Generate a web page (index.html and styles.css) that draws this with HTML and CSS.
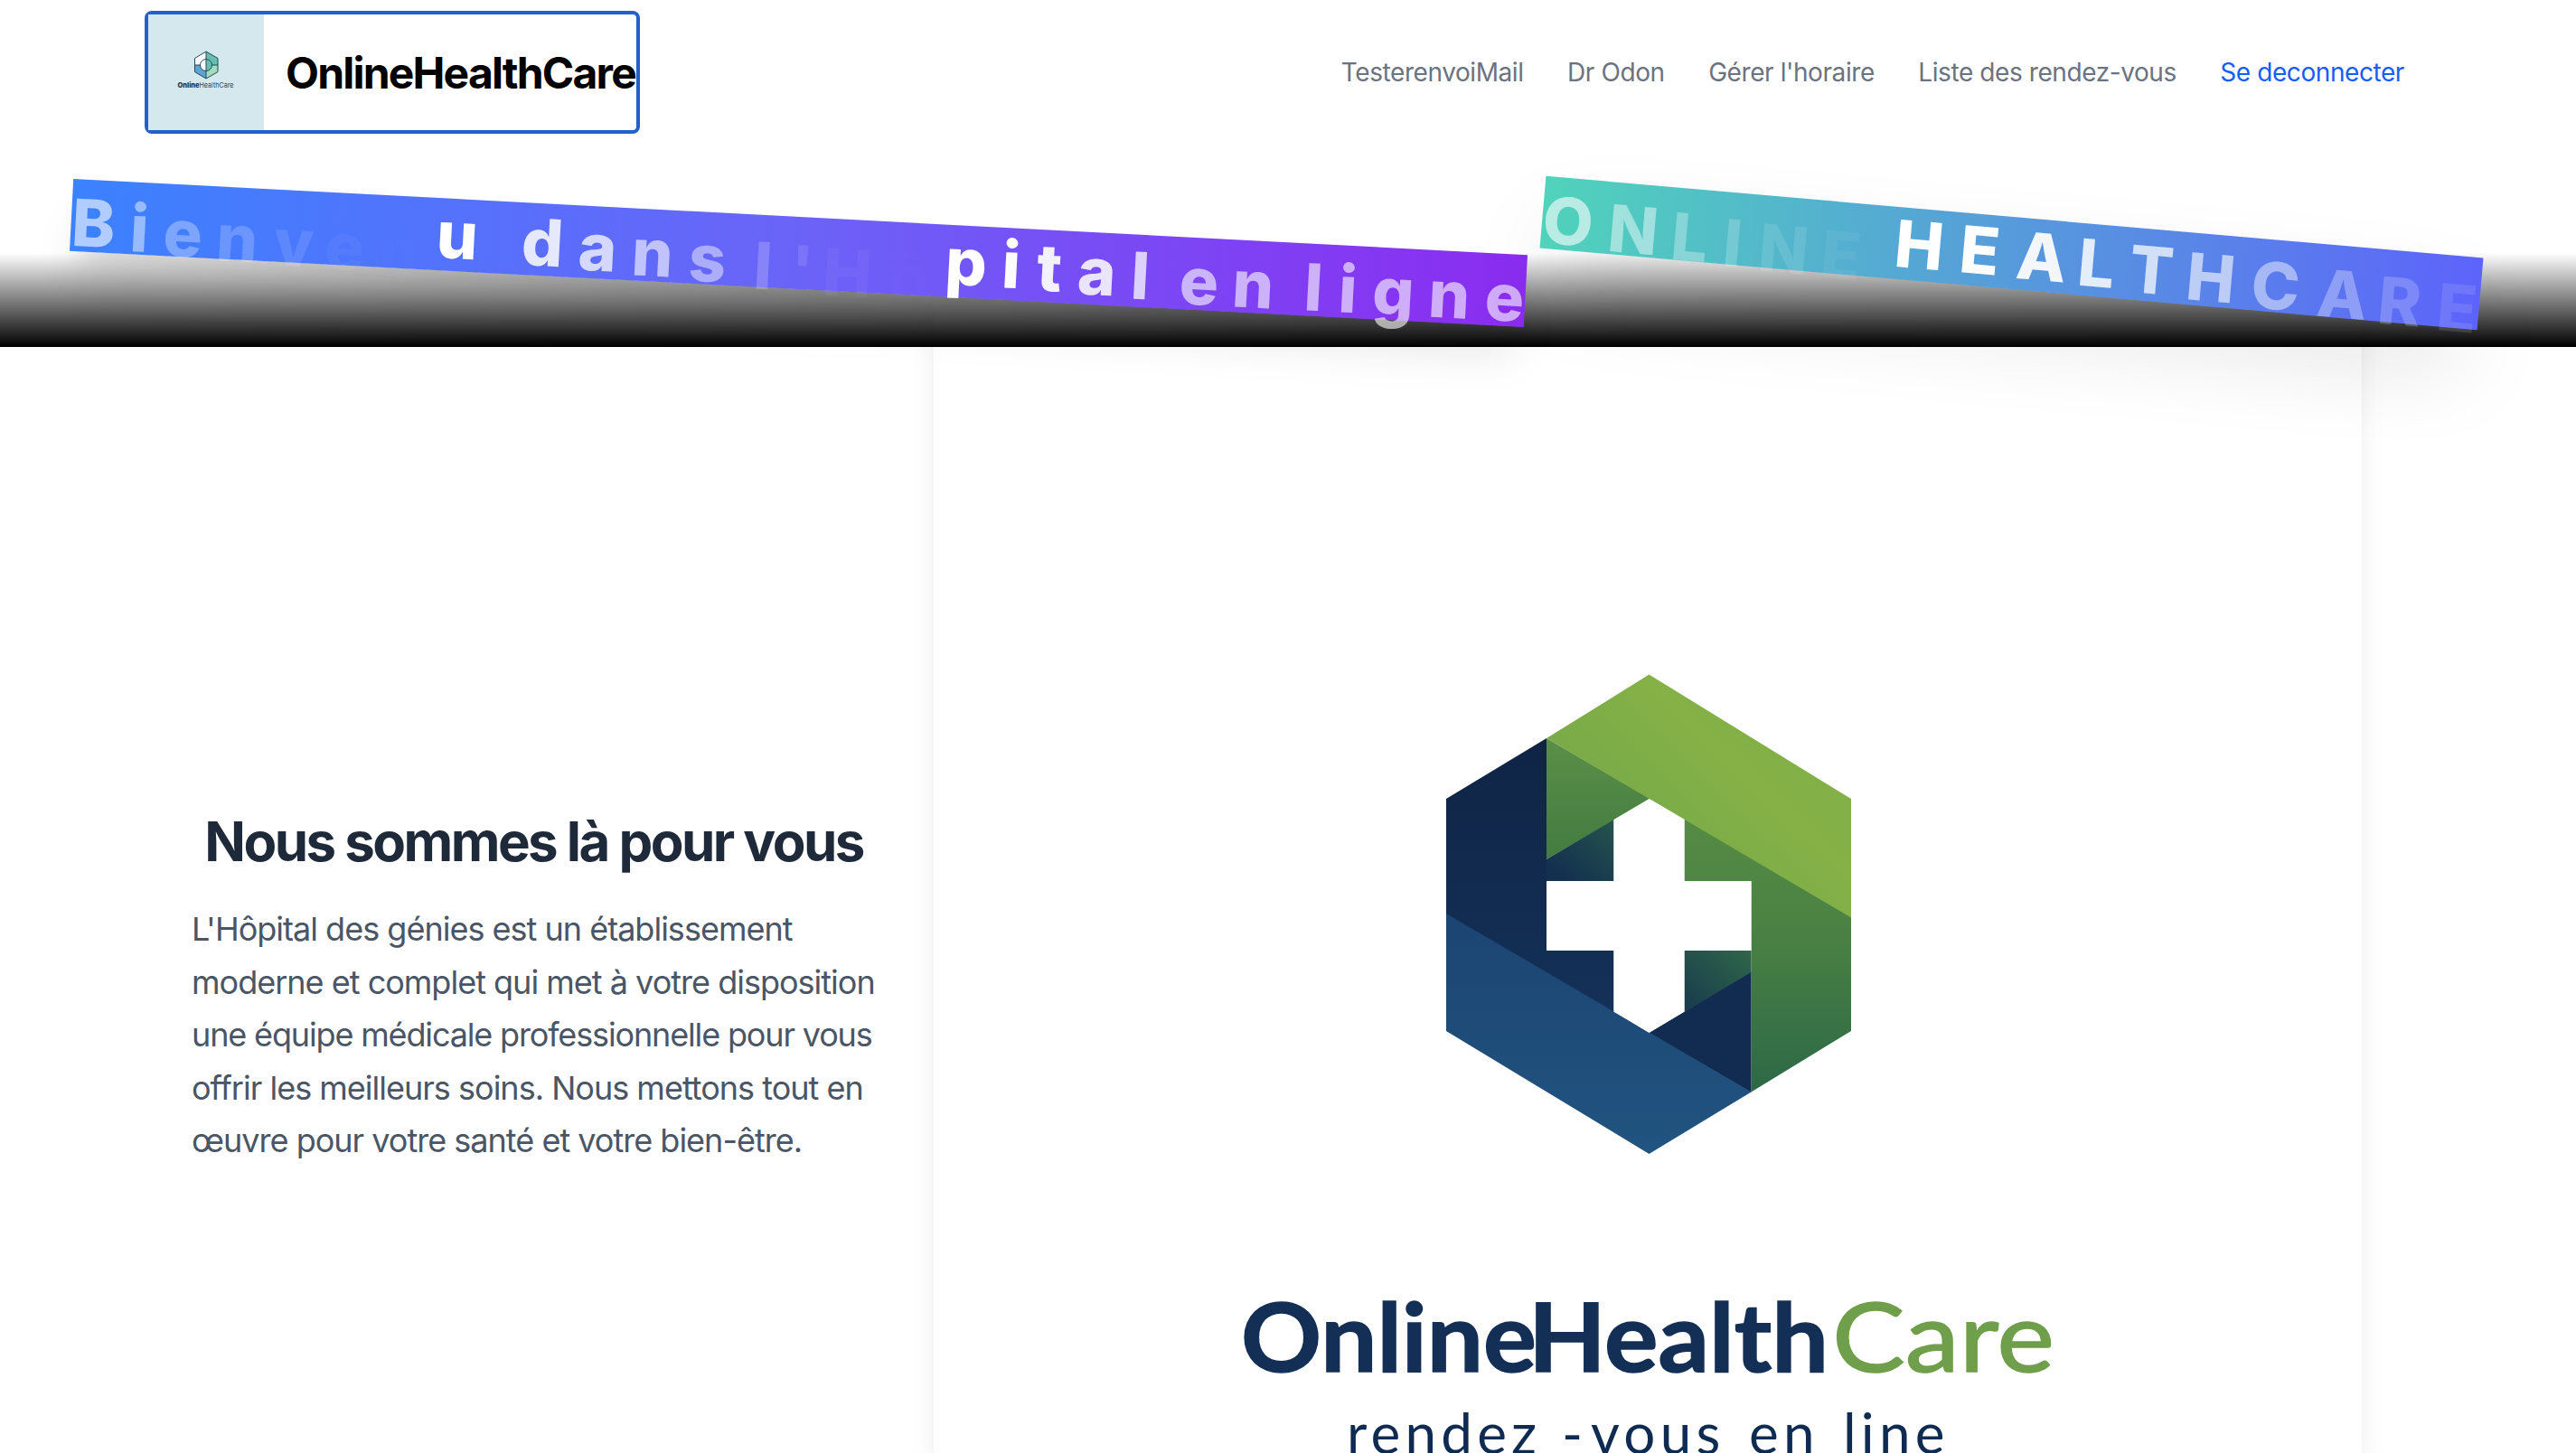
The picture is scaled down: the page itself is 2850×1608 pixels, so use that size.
FILE: index.html
```html
<!DOCTYPE html>
<html lang="fr">
<head>
<meta charset="utf-8">
<title>OnlineHealthCare</title>
<link rel="stylesheet" href="styles.css">
</head>
<body>
<header class="header">
  <a class="brand">
    <svg class="brand-logo" viewBox="0 0 128 128">
      <rect width="128" height="128" fill="#d5e8ed"/>
      <path d="M64 41V56H51.500V48.500Z" fill="#fff"/>
      <path d="M64 41L77 48.500V56H64Z" fill="#66bfae"/>
      <path d="M51.500 56H64V71L51.500 63.500Z" fill="#5fa3d3"/>
      <path d="M77 56H64V71L77 63.500Z" fill="#a3dcbd"/>
      <path d="M64 49.500A6.500 6.500 0 0 0 64 62.500Z" fill="#fff"/>
      <path d="M64 49.500A6.500 6.500 0 0 1 64 62.500Z" fill="#66bfae"/>
      <path d="M64 41L77 48.500V63.500L64 71L51.500 63.500V48.500ZM64 41V71M51.500 56H57.500M70.500 56H77" fill="none" stroke="#23485c"/>
      <circle cx="64" cy="56" r="6.500" fill="none" stroke="#23485c"/>
      <text class="brand-mini brand-mini-bold" x="32.500" y="81" textLength="24" lengthAdjust="spacingAndGlyphs">Online</text>
      <text class="brand-mini" x="56.500" y="81" textLength="38" lengthAdjust="spacingAndGlyphs">HealthCare</text>
    </svg>
    <span class="brand-name">OnlineHealthCare</span>
  </a>
  <nav class="nav">
    <a>TesterenvoiMail</a><a>Dr Odon</a><a>Gérer l'horaire</a><a>Liste des rendez-vous</a><a class="logout">Se deconnecter</a>
  </nav>
</header>
<section class="hero">
  <h1 class="banner banner-welcome"><i style="--o:.6;--w:64.6px">B</i><i style="--o:.46;--w:37px">i</i><i style="--o:.31;--w:59.1px">e</i><i style="--o:.2;--w:63.6px">n</i><i style="--o:.11;--w:56.7px">v</i><i style="--o:.04;--w:59px">e</i><i style="--o:.005;--w:63.5px">n</i><i style="--o:1;--w:94.7px">u </i><i style="--o:.85;--w:62.8px">d</i><i style="--o:.74;--w:59.4px">a</i><i style="--o:.6;--w:63.1px">n</i><i style="--o:.46;--w:72.5px">s </i><i style="--o:.2;--w:40.6px">l</i><i style="--o:.11;--w:36.1px">'</i><i style="--o:.04;--w:72.1px">H</i><i style="--o:.005;--w:62.6px">ô</i><i style="--o:1;--w:62.6px">p</i><i style="--o:.98;--w:39px">i</i><i style="--o:.92;--w:45px">t</i><i style="--o:.85;--w:59.3px">a</i><i style="--o:.74;--w:53.9px">l </i><i style="--o:.6;--w:58.6px">e</i><i style="--o:.6;--w:79.7px">n </i><i style="--o:.6;--w:38px">l</i><i style="--o:.6;--w:37.5px">i</i><i style="--o:.6;--w:62px">g</i><i style="--o:.6;--w:62.7px">n</i><i style="--o:.6;--w:45.3px">e</i></h1>
  <h1 class="banner banner-name"><i style="--o:.6;--w:72.7px">O</i><i style="--o:.46;--w:70.3px">N</i><i style="--o:.31;--w:58px">L</i><i style="--o:.2;--w:39.6px">I</i><i style="--o:.11;--w:69.4px">N</i><i style="--o:.05;--w:80.2px">E </i><i style="--o:1;--w:72.1px">H</i><i style="--o:.99;--w:63.2px">E</i><i style="--o:.93;--w:68.5px">A</i><i style="--o:.84;--w:57px">L</i><i style="--o:.73;--w:63.7px">T</i><i style="--o:.6;--w:72.3px">H</i><i style="--o:.46;--w:73.5px">C</i><i style="--o:.31;--w:67.8px">A</i><i style="--o:.2;--w:65.7px">R</i><i style="--o:.11;--w:46px">E</i></h1>
</section>
<main class="about">
  <div class="about-text">
    <h2>Nous sommes là pour vous</h2>
    <p>L'Hôpital des génies est un établissement<br>moderne et complet qui met à votre disposition<br><span class="tight">une équipe médicale professionnelle pour vous</span><br>offrir les meilleurs soins. Nous mettons tout en<br>œuvre pour votre santé et votre bien-être.</p>
  </div>
  <div class="about-card">
    <svg class="card-art" viewBox="1033 324 1580 1284">
      <defs>
        <linearGradient id="lime" x1="0" y1=".5" x2=".6" y2="0"><stop offset="0" stop-color="#74a848"/><stop offset=".7" stop-color="#85b147"/><stop offset="1" stop-color="#82b046"/></linearGradient>
        <linearGradient id="green" x1="0" y1="0" x2="0" y2="1"><stop offset="0" stop-color="#568b45"/><stop offset=".4" stop-color="#4b8243"/><stop offset="1" stop-color="#2d6847"/></linearGradient>
        <linearGradient id="leaf" x1="0" y1="0" x2="0" y2="1"><stop offset="0" stop-color="#5b8f48"/><stop offset="1" stop-color="#437b41"/></linearGradient>
        <linearGradient id="navy" x1="0" y1="0" x2="0" y2="1"><stop offset="0" stop-color="#0f2445"/><stop offset="1" stop-color="#143158"/></linearGradient>
        <linearGradient id="blue" x1="0" y1="0" x2="0" y2="1"><stop offset="0" stop-color="#1c4472"/><stop offset="1" stop-color="#215480"/></linearGradient>
        <linearGradient id="tealA" x1="0" y1="1" x2="1" y2="0"><stop offset=".15" stop-color="#13304f"/><stop offset="1" stop-color="#26544d"/></linearGradient>
        <linearGradient id="tealB" x1="0" y1="1" x2="1" y2="0"><stop offset="0" stop-color="#183a4e"/><stop offset="1" stop-color="#2f6649"/></linearGradient>
      </defs>
      <path d="M1600 884L1711 817V1052H1785.500V1122L1600 1013Z" fill="url(#navy)"/>
      <path d="M1711 817L1826 884L1711 951Z" fill="url(#leaf)"/>
      <path d="M1711 951L1785.500 907V975H1711Z" fill="url(#tealA)"/>
      <path d="M1863.500 905L2048 1014V1141L1937.500 1208.500V975H1863.500Z" fill="url(#green)"/>
      <path d="M1863.500 1052H1937.500V1077L1863.500 1120Z" fill="url(#tealB)"/>
      <path d="M1824 1143L1937.500 1076V1209Z" fill="#122b50"/>
      <path d="M1711 817L1824.500 746.500L2048 884V1015.500Z" fill="url(#lime)"/>
      <path d="M1600 1011L1937.500 1208.500L1824.500 1277L1600 1141Z" fill="url(#blue)"/>
      <path d="M1824.500 884L1863.500 907V975H1937.500V1052H1863.500V1119.500L1824.500 1143L1785.500 1119.500V1052H1711V975H1785.500V907Z" fill="#fff"/>
      <text class="art-title" x="1373" y="1517.500" textLength="327" lengthAdjust="spacingAndGlyphs">Online</text>
      <text class="art-title" x="1691" y="1517.500" textLength="332" lengthAdjust="spacingAndGlyphs">Health</text>
      <text class="art-title art-care" x="2027" y="1517.500" textLength="246" lengthAdjust="spacingAndGlyphs">Care</text>
      <text class="art-sub" y="1609"><tspan x="1490">rendez</tspan><tspan x="1728">-</tspan><tspan x="1760">vous</tspan><tspan x="1935">en</tspan><tspan x="2039">line</tspan></text>
    </svg>
  </div>
</main>
</body>
</html>
```
FILE: styles.css
```css
* { box-sizing: border-box; }
body { margin: 0; height: 1608px; overflow: hidden; background: #fff; font-family: Inter, "Liberation Sans", sans-serif; display: flex; flex-direction: column; }
h1, h2, p { margin: 0; }

.header { height: 160px; flex: none; padding: 0 190px 0 160px; display: flex; align-items: center; justify-content: space-between; }
.brand { width: 548px; height: 136px; border: 4px solid #2161cb; border-radius: 8px; display: flex; align-items: center; gap: 24px; white-space: nowrap; }
.brand-logo { width: 128px; height: 128px; flex: none; }
.brand-mini { font-size: 8px; fill: #23485c; }
.brand-mini-bold { font-weight: 800; fill: #14303f; }
.brand-name { font-size: 48px; font-weight: 650; letter-spacing: -1.800px; color: #000; }
.nav { display: flex; gap: 48.500px; font-size: 28px; letter-spacing: -.420px; color: #6b7280; white-space: nowrap; }
.logout { color: #155dfc; }

.hero { position: relative; z-index: 1; height: 224px; flex: none; padding: 80px 0 0 78px; display: flex; gap: 16px; align-items: flex-start; background: linear-gradient(transparent 120px, #000 224px); }
.banner { height: 80px; flex: none; display: flex; padding-left: 1px; font-size: 72px; line-height: 80px; font-weight: 800; color: #fff; white-space: nowrap; }
.banner i { flex: none; width: var(--w); font-style: normal; opacity: var(--o); transform: translateY(calc((1 - var(--o)) * 20px)); }
.banner-welcome { width: 1611px; transform: rotate(3deg); background: linear-gradient(90deg, #3b82ff, #6b63f8 50%, #8b2cf0); box-shadow: 0 40px 50px -10px rgba(0, 0, 0, .1), 0 16px 20px -12px rgba(0, 0, 0, .1); }
.banner-name { width: 1041px; transform: rotate(5deg); background: linear-gradient(90deg, #50d3bb, #5d63fb); box-shadow: 0 50px 100px -24px rgba(0, 0, 0, .25); }

.about { flex: 1; display: flex; align-items: flex-start; }
.about-text { width: 1033px; flex: none; padding: 507px 0 0 212px; white-space: nowrap; }
.about-text h2 { width: 757px; text-align: center; font-size: 60px; line-height: 80px; font-weight: 650; letter-spacing: -2.550px; color: #1e2939; }
.about-text p { padding-top: 28px; font-size: 36px; line-height: 58.500px; letter-spacing: -.990px; color: #4a5565; }
.tight { letter-spacing: -1.150px; }
.about-card { width: 1580px; height: 1284px; flex: none; margin-top: -60px; background: #fff; box-shadow: 0 20px 30px -6px rgba(0, 0, 0, .1), 0 8px 12px -8px rgba(0, 0, 0, .1); }
.card-art { display: block; width: 1580px; height: 1284px; }
.art-title { font-family: Lato, sans-serif; font-size: 106px; font-weight: 700; fill: #142f55; stroke: #142f55; stroke-width: 1.500px; }
.art-care { font-weight: 400; fill: #6f9f4a; stroke: #6f9f4a; }
.art-sub { font-family: Lato, sans-serif; font-size: 62px; letter-spacing: 5.200px; fill: #0f2b52; }
```
